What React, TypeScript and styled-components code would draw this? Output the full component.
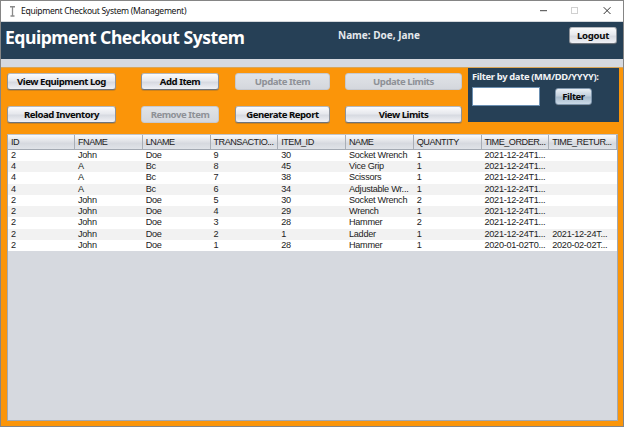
import React from "react";
import styled, { createGlobalStyle, css } from "styled-components";

const GlobalStyle = createGlobalStyle`
  * { box-sizing: border-box; }
  body { margin: 0; overflow: hidden; }
`;

const Window = styled.div`
  width: 624px;
  height: 427px;
  display: flex;
  flex-direction: column;
  border: 1px solid #858585;
  background: #d6d9df;
  font-family: "Noto Sans", "Open Sans", sans-serif;
`;

const TitleBar = styled.div`
  height: 21px;
  flex: none;
  display: flex;
  align-items: center;
  background: #fff;
  border-bottom: 1px solid #d4d8dc;
  color: #111;
`;

const AppIcon = styled.svg`
  width: 9px;
  height: 13px;
  margin-left: 7px;
`;

const WindowTitle = styled.span`
  flex: 1;
  margin-left: 4px;
  font-size: 8.6px;
  line-height: 20px;
  letter-spacing: -0.32px;
  white-space: nowrap;
`;

const WindowControls = styled.svg`
  width: 84px;
  height: 20px;
`;

const Header = styled.header`
  height: 37px;
  flex: none;
  display: flex;
  background: #264056;
  color: #fff;
`;

const AppName = styled.h1`
  margin: 0;
  width: 333px;
  padding-left: 4px;
  font-size: 17.6px;
  line-height: 30px;
  font-weight: 700;
  letter-spacing: -0.5px;
  white-space: nowrap;
`;

const UserName = styled.div`
  flex: 1;
  padding-left: 4px;
  font-size: 10px;
  line-height: 26px;
  font-weight: 700;
  color: #e4e8ec;
  white-space: nowrap;
`;

const Button = styled.button<{ $w: number; $tone?: "default" }>`
  width: ${(p) => p.$w}px;
  height: 17px;
  flex: none;
  padding: 0;
  border: 1px solid #8d9299;
  border-top-color: #b4b8be;
  border-bottom-color: #6d747d;
  border-radius: 3px;
  background: linear-gradient(#fbfbfc 0%, #e6e8ed 45%, #d7dae1 55%, #f0f1f5 100%);
  box-shadow: 0 1px 0 rgba(80, 80, 80, 0.25);
  color: #0a0a0a;
  font-family: inherit;
  font-size: 9.6px;
  font-weight: 700;
  line-height: 14px;
  letter-spacing: -0.47px;
  white-space: nowrap;
  ${(p) =>
    p.$tone === "default" &&
    css`
      border-color: #7f96ac;
      background: linear-gradient(#e9eff5 0%, #c3d0dd 45%, #a9bccd 55%, #cbdae7 100%);
    `}
  &:disabled {
    border-color: #c6c9cf;
    background: linear-gradient(#e0e3e7, #d4d7dd);
    box-shadow: none;
    color: #8e9197;
  }
`;

const Logout = styled(Button)`
  margin: 5px 6px 0 0;
  letter-spacing: -0.3px;
`;

const Body = styled.main`
  flex: 1;
  min-height: 0;
  margin-top: 8px;
  padding: 0 4px 5px 6px;
  display: flex;
  flex-direction: column;
  background: #fb9509;
  border-top: 1px solid #d8a557;
`;

const Toolbar = styled.div`
  height: 66px;
  flex: none;
  display: flex;
`;

const Actions = styled.div`
  flex: 1;
  display: grid;
  grid-template-columns: 134px 94px 110px 117px;
  grid-template-rows: 17px 17px;
  row-gap: 16px;
  padding-top: 5px;
`;

const FilterPanel = styled.div`
  width: 151px;
  height: 54px;
  padding: 1px 0 0 4px;
  background: #264056;
`;

const FilterLabel = styled.label`
  display: block;
  color: #f1f3f5;
  font-size: 9.4px;
  font-weight: 700;
  line-height: 16px;
  letter-spacing: -0.33px;
  white-space: nowrap;
`;

const FilterRow = styled.div`
  display: flex;
  align-items: center;
  gap: 15px;
  margin-top: 2px;
`;

const DateInput = styled.input`
  width: 68px;
  height: 19px;
  border: 1px solid #6b8fb1;
  background: #fff;
  outline: 0;
`;

const TablePane = styled.section`
  flex: 1;
  width: 611px;
  border: 1px solid #a2a8b2;
  border-top-color: #c2c4c8;
  background: #d6d9df;
  color: #222;
  font-family: "Liberation Sans", Arial, sans-serif;
  font-size: 9.15px;
  letter-spacing: -0.27px;
`;

const Row = styled.div`
  display: grid;
  grid-template-columns: 67px repeat(8, 67.75px);
  height: 11.22px;
  line-height: 11.5px;
  background: #fff;
  &:nth-child(odd) { background: #f2f2f2; }
`;

const HeadRow = styled(Row)`
  height: 15px;
  line-height: 14px;
  letter-spacing: -0.5px;
  border-bottom: 1px solid #a4aab3;
  &:nth-child(odd) {
    background: linear-gradient(#fafafb 0%, #e3e5e9 40%, #d6d9df 60%, #e0e3e8 100%);
  }
`;

const Cell = styled.span`
  padding-left: 3px;
  white-space: nowrap;
`;

const HeadCell = styled(Cell)`
  border-right: 1px solid #a9aeb6;
`;

const columns = ["ID", "FNAME", "LNAME", "TRANSACTIO...", "ITEM_ID", "NAME", "QUANTITY", "TIME_ORDER...", "TIME_RETUR..."];

const rows = [
  ["2", "John", "Doe", "9", "30", "Socket Wrench", "1", "2021-12-24T1...", ""],
  ["4", "A", "Bc", "8", "45", "Vice Grip", "1", "2021-12-24T1...", ""],
  ["4", "A", "Bc", "7", "38", "Scissors", "1", "2021-12-24T1...", ""],
  ["4", "A", "Bc", "6", "34", "Adjustable Wr...", "1", "2021-12-24T1...", ""],
  ["2", "John", "Doe", "5", "30", "Socket Wrench", "2", "2021-12-24T1...", ""],
  ["2", "John", "Doe", "4", "29", "Wrench", "1", "2021-12-24T1...", ""],
  ["2", "John", "Doe", "3", "28", "Hammer", "2", "2021-12-24T1...", ""],
  ["2", "John", "Doe", "2", "1", "Ladder", "1", "2021-12-24T1...", "2021-12-24T..."],
  ["2", "John", "Doe", "1", "28", "Hammer", "1", "2020-01-02T0...", "2020-02-02T..."],
];

export default function App() {
  return (
    <>
      <GlobalStyle />
      <Window>
        <TitleBar>
          <AppIcon viewBox="0 0 9 13">
            <path d="M2 1.8h5M2.5 11h4" stroke="#8a8a8a" strokeWidth="1.4" />
            <path d="M4.5 2v9" stroke="#8a8a8a" strokeWidth="1.3" />
          </AppIcon>
          <WindowTitle>Equipment Checkout System (Management)</WindowTitle>
          <WindowControls viewBox="0 0 84 20" fill="none">
            <path d="M1 9.7h7" stroke="#444" strokeWidth="1" />
            <rect x="32.5" y="6.5" width="6" height="6" stroke="#d0d0d0" />
            <path d="M64.7 6.2l6.8 6.8M71.5 6.2l-6.8 6.8" stroke="#333" strokeWidth="1" />
          </WindowControls>
        </TitleBar>
        <Header>
          <AppName>Equipment Checkout System</AppName>
          <UserName>Name: Doe, Jane</UserName>
          <Logout $w={48}>Logout</Logout>
        </Header>
        <Body>
          <Toolbar>
            <Actions>
              <Button $w={109}>View Equipment Log</Button>
              <Button $w={78}>Add Item</Button>
              <Button $w={95} disabled>Update Item</Button>
              <Button $w={117} disabled>Update Limits</Button>
              <Button $w={109}>Reload Inventory</Button>
              <Button $w={78} disabled>Remove Item</Button>
              <Button $w={95}>Generate Report</Button>
              <Button $w={117}>View Limits</Button>
            </Actions>
            <FilterPanel>
              <FilterLabel htmlFor="date">Filter by date (MM/DD/YYYY):</FilterLabel>
              <FilterRow>
                <DateInput id="date" />
                <Button $w={37} $tone="default">Filter</Button>
              </FilterRow>
            </FilterPanel>
          </Toolbar>
          <TablePane>
            <HeadRow>
              {columns.map((c) => (
                <HeadCell key={c}>{c}</HeadCell>
              ))}
            </HeadRow>
            {rows.map((r, i) => (
              <Row key={i}>
                {r.map((v, j) => (
                  <Cell key={j}>{v}</Cell>
                ))}
              </Row>
            ))}
          </TablePane>
        </Body>
      </Window>
    </>
  );
}
